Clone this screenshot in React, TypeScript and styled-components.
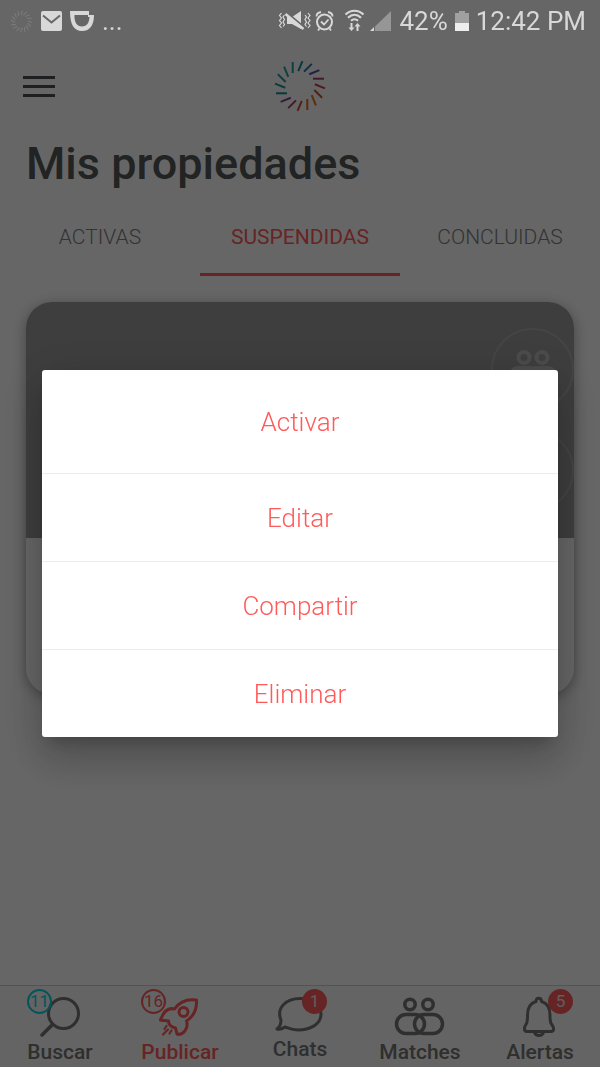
import React from "react";
import styled, { createGlobalStyle, css } from "styled-components";

const coral = "#ff5a5a";
const ink = "#757575";

const GlobalStyle = createGlobalStyle`
  * { box-sizing: border-box; }
  body { margin: 0; background: #fff; font-family: Roboto, "Noto Sans", sans-serif; }
  button { font: inherit; color: inherit; background: none; border: 0; padding: 0; cursor: pointer; }
  svg { display: block; }
`;

const Screen = styled.div`
  min-height: 100vh;
  display: flex;
  flex-direction: column;
  background: #fff;
`;

const StatusBar = styled.div`
  position: relative;
  z-index: 3;
  height: 42px;
  padding: 0 14px 0 10px;
  display: flex;
  align-items: center;
  justify-content: space-between;
  color: #d8d8d8;
`;

const StatusGroup = styled.div<{ $gap: number }>`
  display: flex;
  align-items: center;
  gap: ${(p) => p.$gap}px;
`;

const StatusText = styled.span`
  font-size: 26px;
  line-height: 40px;
  white-space: nowrap;
`;

const Header = styled.header`
  height: 90px;
  padding: 0 23px 2px;
  display: grid;
  grid-template-columns: 1fr auto 1fr;
  align-items: center;
`;

const MenuButton = styled.button`
  width: 32px;
  height: 24px;
  display: flex;
  flex-direction: column;
  justify-content: center;
  gap: 6px;
`;

const MenuLine = styled.span`
  height: 3px;
  background: #4c4f50;
`;

const Title = styled.h1`
  margin: 0;
  padding: 0 26px;
  font-size: 45px;
  line-height: 64px;
  font-weight: 500;
  color: #555759;
`;

const Tabs = styled.div`
  display: grid;
  grid-template-columns: repeat(3, 1fr);
`;

const Tab = styled.button<{ $active?: boolean }>`
  height: 80px;
  padding-top: 4px;
  font-size: 21px;
  line-height: 24px;
  font-weight: 300;
  color: #808080;
  border-bottom: 3px solid transparent;
  ${(p) =>
    p.$active &&
    css`
      font-weight: 400;
      color: ${coral};
      border-bottom-color: ${coral};
    `}
`;

const Main = styled.main`
  flex: 1;
  padding: 26px;
`;

const Card = styled.article`
  border-radius: 26px;
  overflow: hidden;
  background: #fff;
  box-shadow: 0 3px 14px rgba(0, 0, 0, 0.35);
`;

const Photo = styled.div`
  height: 236px;
  padding-top: 26px;
  background: #9b9b9b;
  display: flex;
  flex-direction: column;
  align-items: flex-end;
  gap: 18px;
`;

const RoundButton = styled.button`
  width: 83px;
  height: 83px;
  flex: none;
  border: 2px solid #acacac;
  border-radius: 50%;
  color: #bcbcbc;
  display: flex;
  align-items: flex-start;
  justify-content: center;
  padding-top: 20px;
`;

const CardBody = styled.div`
  height: 156px;
`;

const BottomNav = styled.nav`
  height: 82px;
  display: grid;
  grid-template-columns: repeat(5, 1fr);
  border-top: 1px solid #cfcfcf;
  background: #f9f9f9;
`;

const NavItem = styled.a<{ $active?: boolean }>`
  display: flex;
  flex-direction: column;
  align-items: center;
  padding-top: 3px;
  text-decoration: none;
  color: ${(p) => (p.$active ? coral : ink)};
`;

const NavIcon = styled.span<{ $short?: boolean; $wide?: boolean }>`
  position: relative;
  display: flex;
  justify-content: center;
  width: ${(p) => (p.$wide ? 78 : 66)}px;
  height: ${(p) => (p.$short ? 48 : 51)}px;
`;

const NavLabel = styled.span`
  font-size: 21px;
  line-height: 24px;
  font-weight: 500;
`;

const Badge = styled.span<{ $side: "left" | "right"; $tone: string; $filled?: boolean }>`
  position: absolute;
  top: 0;
  ${(p) => (p.$side === "left" ? "left: 0;" : "right: 6px;")}
  width: 25px;
  height: 25px;
  border-radius: 50%;
  border: 2px solid ${(p) => p.$tone};
  background: ${(p) => (p.$filled ? p.$tone : "transparent")};
  color: ${(p) => (p.$filled ? "#ececec" : p.$tone)};
  font-size: 17px;
  line-height: 21px;
  text-align: center;
`;

const Backdrop = styled.div`
  position: fixed;
  inset: 0;
  z-index: 2;
  padding: 40px 7% 0;
  display: flex;
  align-items: center;
  justify-content: center;
  background: rgba(0, 0, 0, 0.6);
`;

const ActionMenu = styled.div`
  width: 100%;
  border-radius: 3px;
  overflow: hidden;
  background: #fff;
  box-shadow: 0 11px 15px -7px rgba(0, 0, 0, 0.2), 0 24px 38px 3px rgba(0, 0, 0, 0.14),
    0 9px 46px 8px rgba(0, 0, 0, 0.12);
`;

const Action = styled.button`
  display: block;
  width: 100%;
  height: 88px;
  font-size: 26px;
  line-height: 32px;
  font-weight: 300;
  color: ${coral};
  &:first-child { height: 103px; }
  & + & { border-top: 1px solid #ededed; }
`;

const rayColors = [
  "#a83a78", "#c8404e", "#d8502c", "#e07818", "#e06a20", "#d04a3c", "#a83c64", "#82469c",
  "#148c98", "#1e969e", "#289a9e", "#329a9e", "#289a9e", "#148c9c", "#1e78a0", "#5a4ca8",
];

const Sunburst = ({ size, tone }: { size: number; tone?: string }) => (
  <svg width={size} height={size} viewBox="-27 -27 54 54" aria-hidden="true">
    {rayColors.map((c, i) => (
      <path
        key={i}
        d="M13 -7.3H24"
        stroke={tone ?? c}
        strokeWidth={tone ? 3 : 2}
        transform={`rotate(${i * 22.5})`}
      />
    ))}
  </svg>
);

const Pair = () => (
  <svg width="50" height="38" viewBox="0 0 50 38" fill="none" stroke="currentColor" strokeWidth="4" aria-hidden="true">
    <circle cx="16" cy="7.5" r="5.5" />
    <circle cx="34" cy="7.5" r="5.5" />
    <rect x="2" y="18" width="28" height="18" rx="9" />
    <rect x="20" y="18" width="28" height="18" rx="9" />
  </svg>
);

const art = {
  width: 66,
  height: 48,
  viewBox: "0 0 66 48",
  fill: "none",
  stroke: "currentColor",
  strokeWidth: 3,
  strokeLinecap: "round" as const,
  strokeLinejoin: "round" as const,
  "aria-hidden": true,
};

const SearchArt = () => (
  <svg {...art}>
    <circle cx="36.5" cy="24.5" r="15" />
    <path d="M25.5 35.5L15 46" strokeWidth="3.5" />
  </svg>
);

const RocketArt = () => (
  <svg {...art}>
    <path d="M49.500 11C42 10 33 12 27.500 20C20 18 16 24 13.500 31C17 32 19 31 21.500 32C21.500 36 24 38 28.500 39L30 45C36 47 42 39 39.500 32C47 27 50 19 49.500 11Z" />
    <circle cx="36.5" cy="23" r="4.5" />
    <path d="M19.5 37L17.500 40M21 40.500L16 45.500M24.500 41.500L22.500 44.500" strokeWidth="2.2" />
  </svg>
);

const ChatArt = () => (
  <svg {...art}>
    <path d="M10 40C14 37 14 34 14 31C9 19 19 9.500 33 9.500C47 9.500 54 17 54 25C54 36 42 41 31 41C25 41 21 39 18 38C15 40 13 41 10 40Z" />
  </svg>
);

const PairArt = () => (
  <svg {...art} strokeWidth="3.5">
    <circle cx="23" cy="15.5" r="5.2" />
    <circle cx="41" cy="15.5" r="5.2" />
    <rect x="9.500" y="25.500" width="28" height="19" rx="9.500" />
    <rect x="27.500" y="25.500" width="28" height="19" rx="9.500" />
  </svg>
);

const BellArt = () => (
  <svg {...art}>
    <path d="M17.500 40C17 36 20.500 37 20.500 29V26C20.500 18 24 14 29 12.500C29 8 34.500 8 34.500 12.500C40 14 43 18 43 26V29C43 37 47 36 46.500 40C46.500 42 45 42.500 44 42.500H20C18.500 42.500 17.500 42 17.500 40Z" />
    <path d="M27.500 43.500C29 47.500 35 47.500 36.500 43.500" />
  </svg>
);

const StatusIcons = () => (
  <svg width="114" height="26" viewBox="0 0 114 26" fill="none" stroke="currentColor" strokeWidth="1.6" aria-hidden="true">
    <path d="M3.500 5l-2 2.500 2 2.500-2 2.500 2 2.500-2 2.500 2 2.500M6.500 7l-1.500 2 1.500 2.500-1.500 2.500 1.500 2.500-1.500 2M27 7l1.500 2-1.500 2.500 1.500 2.500-1.500 2.500 1.500 2M30 5l2 2.500-2 2.500 2 2.500-2 2.500 2 2.500-2 2.500" strokeWidth="1.2" />
    <path d="M9 9h5l9-6v18l-9-5H9z" fill="currentColor" stroke="none" />
    <path d="M8 4L26 19" stroke="#666" strokeWidth="2" />
    <path d="M7.500 6L25.500 21" strokeWidth="2.4" />
    <circle cx="46.5" cy="14" r="7.5" strokeWidth="2" />
    <path d="M43 13.500l3 3 4.500-5M38.500 8.500C38.500 6 40 4.500 43 4M54.500 8.500C54.500 6 53 4.500 50 4M41.500 20.500l-1.500 2M51.500 20.500l1.500 2" strokeWidth="1.8" />
    <path d="M67.500 6.500C73 1.500 80 1.500 85.500 6.500M70 9.800C74 6 79 6 83 9.800M73 12.800C75 11 78 11 80 12.800" strokeWidth="2.2" />
    <path d="M73.500 15v5M79.500 23v-5" strokeWidth="2" />
    <path d="M70.500 19.500h6l-3 3.500zM76.500 18.500h6l-3-3.500z" fill="currentColor" stroke="none" />
    <path d="M113 3v20H97V18.500z" fill="#969696" stroke="none" />
    <path d="M92 23l4-4v4z" fill="currentColor" stroke="none" />
  </svg>
);

const navItems = [
  { label: "Buscar", art: <SearchArt />, badge: "11", side: "left" as const, tone: "#00d8e4" },
  { label: "Publicar", art: <RocketArt />, badge: "16", side: "left" as const, tone: coral, active: true, wide: true },
  { label: "Chats", art: <ChatArt />, badge: "1", side: "right" as const, tone: coral, filled: true, short: true },
  { label: "Matches", art: <PairArt /> },
  { label: "Alertas", art: <BellArt />, badge: "5", side: "right" as const, tone: coral, filled: true, wide: true },
];

export default function App() {
  return (
    <Screen>
      <GlobalStyle />
      <StatusBar>
        <StatusGroup $gap={8}>
          <Sunburst size={23} tone="#787878" />
          <svg width="21" height="20" viewBox="0 0 21 20" aria-hidden="true">
            <rect width="21" height="20" rx="2" fill="currentColor" />
            <path d="M2 4.500L10.500 11.500L19 4.500" fill="none" stroke="#666" strokeWidth="2" />
          </svg>
          <svg width="24" height="20" viewBox="0 0 24 20" aria-hidden="true">
            <path d="M0 0H19V4H24C24 14 20 20 12 20S0 14 0 0Z" fill="currentColor" />
            <path d="M4.500 4H18V6H19.500C19 12 17 15.500 12 15.500S4 11 4.500 4Z" fill="#666" />
          </svg>
          <StatusText>...</StatusText>
        </StatusGroup>
        <StatusGroup $gap={7}>
          <StatusIcons />
          <StatusText>42%</StatusText>
          <svg width="14" height="20" viewBox="0 0 14 20" aria-hidden="true">
            <path d="M0 2H4V0H10V2H14V12H0Z" fill="#a0a0a0" />
            <path d="M0 12H14V20H0Z" fill="#eee" />
          </svg>
          <StatusText>12:42 PM</StatusText>
        </StatusGroup>
      </StatusBar>

      <Header>
        <MenuButton aria-label="Menú">
          <MenuLine />
          <MenuLine />
          <MenuLine />
        </MenuButton>
        <Sunburst size={54} />
      </Header>
      <Title>Mis propiedades</Title>
      <Tabs role="tablist">
        <Tab role="tab" aria-selected={false}>ACTIVAS</Tab>
        <Tab role="tab" aria-selected $active>SUSPENDIDAS</Tab>
        <Tab role="tab" aria-selected={false}>CONCLUIDAS</Tab>
      </Tabs>

      <Main>
        <Card>
          <Photo>
            <RoundButton aria-label="Matches">
              <Pair />
            </RoundButton>
            <RoundButton aria-label="Chats" />
          </Photo>
          <CardBody />
        </Card>
      </Main>

      <BottomNav>
        {navItems.map((n) => (
          <NavItem key={n.label} href={`#${n.label.toLowerCase()}`} $active={n.active}>
            <NavIcon $short={n.short} $wide={n.wide}>
              {n.art}
              {n.badge && (
                <Badge $side={n.side!} $tone={n.tone!} $filled={n.filled}>
                  {n.badge}
                </Badge>
              )}
            </NavIcon>
            <NavLabel>{n.label}</NavLabel>
          </NavItem>
        ))}
      </BottomNav>

      <Backdrop>
        <ActionMenu role="dialog" aria-modal="true" aria-label="Opciones">
          <Action>Activar</Action>
          <Action>Editar</Action>
          <Action>Compartir</Action>
          <Action>Eliminar</Action>
        </ActionMenu>
      </Backdrop>
    </Screen>
  );
}
